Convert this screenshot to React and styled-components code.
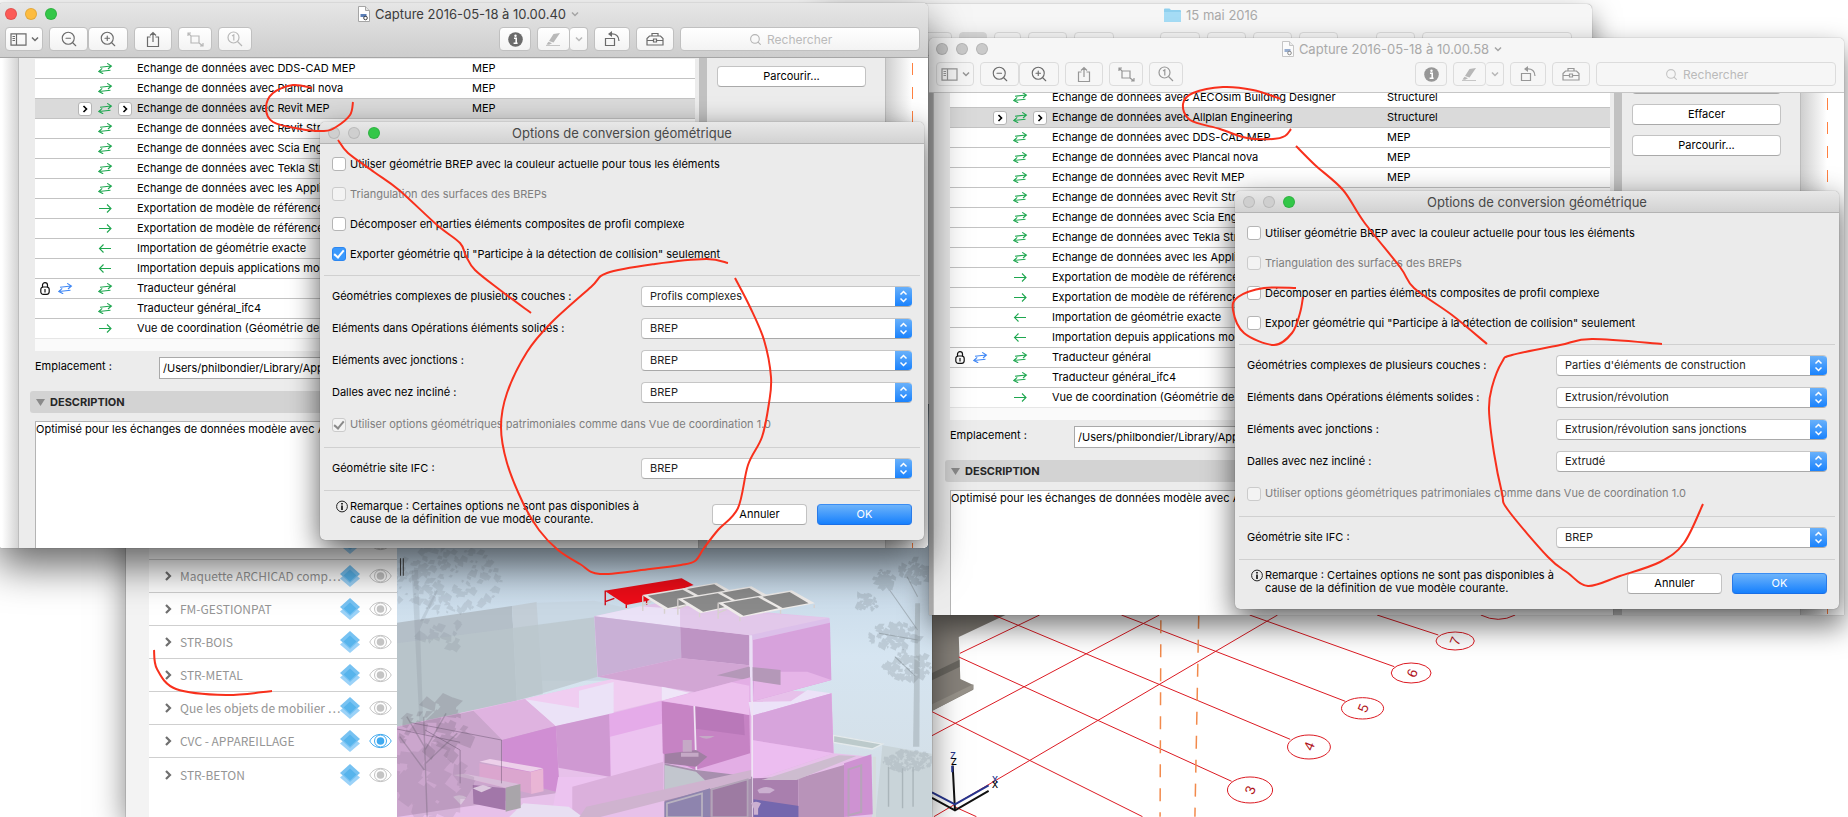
import React, { Fragment, useId, useState } from 'react'
import styled, { createGlobalStyle, css } from 'styled-components'
import { Search, ZoomIn, ZoomOut } from 'lucide-react'

const GlobalStyle = createGlobalStyle`
  * {
    box-sizing: border-box;
  }
  body {
    margin: 0;
    background: #fff;
    font-family: Inter, "Liberation Sans", sans-serif;
    font-size: 11px;
    line-height: 13px;
    color: #000;
  }
  button, input, select, textarea {
    font: inherit;
    color: inherit;
    margin: 0;
  }
`

const Desktop = styled.main`
  position: relative;
  min-height: 100vh;
  overflow: hidden;
`

/* windows */

const Window = styled.section`
  position: absolute;
  overflow: hidden;
  display: flex;
  flex-direction: column;
  background: #fff;
  border-radius: 5px 5px ${props => props.$active ? '5px 5px' : '0 0'};
  left: ${props => props.$x}px;
  top: ${props => props.$y}px;
  width: ${props => props.$w}px;
  height: ${props => props.$h}px;
  box-shadow: ${props => props.$active
    ? '0 0 1px rgba(0, 0, 0, .5), 0 18px 40px rgba(0, 0, 0, .6)'
    : '0 0 1px rgba(0, 0, 0, .5), 0 12px 28px rgba(0, 0, 0, .52)'};
`

const Header = styled.header`
  position: relative;
  flex: none;
  height: 55px;
  padding: 0 8px 0 7px;
  border-bottom: 1px solid ${props => props.$active ? '#a6a6a6' : '#c6c6c6'};
  background: ${props => props.$active ? 'linear-gradient(#e6e6e6, #cdcdcd)' : '#f6f6f6'};
`

const TitleRow = styled.div`
  display: grid;
  grid-template-columns: 60px 1fr 48px;
  align-items: center;
  height: 24px;
  padding-bottom: 2px;
`

const Lights = styled.div`
  display: flex;
  gap: 8px;
`

const Light = styled.button`
  width: 12px;
  height: 12px;
  padding: 0;
  border-radius: 50%;
  border: 1px solid rgba(0, 0, 0, .1);
  background: ${props => props.$color};
`

const Title = styled.h1`
  display: flex;
  align-items: center;
  justify-content: center;
  gap: 5px;
  margin: 0;
  font-size: 13px;
  line-height: 16px;
  font-weight: 400;
  color: ${props => props.$active ? '#3c3c3c' : '#a9a9a9'};
`

const Toolbar = styled.div`
  display: flex;
  gap: 6px;
  color: ${props => props.$active ? '#6b6b6b' : '#979797'};
`

const ToolButton = styled.button`
  display: flex;
  align-items: center;
  justify-content: center;
  gap: 4px;
  height: 24px;
  width: ${props => props.$w}px;
  padding: 0;
  border-radius: 4px;
  border: 1px solid ${props => props.$active ? '#c0c0c0' : '#dcdcdc'};
  background: ${props => props.$active ? 'linear-gradient(#fff, #f3f3f3)' : '#f6f6f6'};
  svg {
    opacity: ${props => props.$faded ? .45 : 1};
  }
`

const Joined = styled.div`
  display: flex;
  color: #6b6b6b;
  button + button {
    border-left-width: ${props => props.$flush ? 0 : 1}px;
  }
`

const Spacer = styled.div`
  flex: 1;
`

const SearchBox = styled.label`
  display: flex;
  align-items: center;
  gap: 5px;
  width: 240px;
  height: 24px;
  padding-left: 68px;
  border-radius: 4px;
  color: ${props => props.$active ? '#b4b4b4' : '#c3c3c3'};
  border: 1px solid ${props => props.$active ? '#c0c0c0' : '#dcdcdc'};
  background: ${props => props.$active ? 'linear-gradient(#fff, #f3f3f3)' : '#f6f6f6'};
`

const SearchInput = styled.input`
  width: 120px;
  border: 0;
  padding: 0;
  background: none;
  outline: none;
  font-size: 12px;
  &::placeholder {
    color: #bababa;
    opacity: 1;
  }
`

/* translator panel */

const Body = styled.div`
  flex: 1;
  display: flex;
  min-height: 0;
  overflow: hidden;
  background: #fff;
`

const Gutter = styled.div`
  flex: none;
  width: ${props => props.$w}px;
  background: ${props => props.$w > 10 ? 'linear-gradient(90deg, #fff 20%, #d4d4d4)' : '#a9a9a9'};
`

const RightGutter = styled.div`
  flex: 1;
  padding-left: 26px;
  background: linear-gradient(90deg, #cfcfcf, #fff 26px);
  &::before {
    content: '';
    display: block;
    width: 1px;
    height: 100%;
    background: repeating-linear-gradient(transparent 0 5px, #ff8040 5px 17px, transparent 17px 24px);
  }
`

const Panel = styled.div`
  display: flex;
  flex: none;
  width: 868px;
  background: #ececec;
  border-left: 1px solid #bdbdbd;
  border-right: 1px solid #bdbdbd;
`

const Main = styled.div`
  flex: none;
  display: flex;
  flex-direction: column;
  width: 680px;
  padding-left: 11px;
  margin-top: ${props => props.$scroll}px;
`

const Table = styled.table`
  width: 660px;
  margin: 0 0 0 5px;
  border-collapse: separate;
  border-spacing: 0;
  table-layout: fixed;
  background: #fff;
`

const Row = styled.tr`
  height: 20px;
  background: ${props => props.$selected ? '#dadada' : '#fff'};
  td {
    padding: 0;
    height: 20px;
    overflow: hidden;
    white-space: nowrap;
    border-bottom: 1px solid #c3c3c3;
    text-align: center;
  }
  &:last-child td {
    height: 18px;
    border-color: #e6e6e6;
  }
  td.text {
    text-align: left;
    padding-left: 2px;
  }
  svg {
    display: block;
    margin: auto;
  }
`

const Pager = styled.button`
  display: block;
  width: 14px;
  height: 14px;
  margin: auto;
  padding: 0;
  border: 1px solid #b5b5b5;
  border-radius: 3px;
  background: #fff;
`

const TableFoot = styled.div`
  flex: none;
  width: 660px;
  height: 12px;
  margin-left: 5px;
  background: #fafafa;
`

const Location = styled.label`
  flex: none;
  display: flex;
  align-items: center;
  height: 22px;
  margin: 6px 0 12px 5px;
`

const LocationLabel = styled.span`
  width: 124px;
  padding-bottom: 4px;
`

const LocationInput = styled.input`
  width: 540px;
  height: 22px;
  padding: 0 3px;
  border: 1px solid #a9a9a9;
  background: #fff;
`

const SectionBar = styled.button`
  flex: none;
  display: flex;
  align-items: center;
  gap: 5px;
  height: 22px;
  padding: 0 6px;
  border: 0;
  border-radius: 3px;
  background: #d3d3d3;
  font-size: 11px;
  font-weight: 700;
  color: #262626;
`

const Description = styled.textarea`
  flex: 1;
  margin: 8px 0 0 5px;
  padding: 1px 0 0;
  border: 1px solid #b4b4b4;
  border-bottom: 0;
  background: #fff;
  resize: none;
`

const ScrollTrack = styled.div`
  flex: none;
  width: 8px;
  background: #c1c1c1;
`

const Side = styled.div`
  display: flex;
  flex-direction: column;
  gap: 10px;
  padding-left: 10px;
  margin-top: ${props => props.$shift}px;
`

const PushButton = styled.button`
  width: ${props => props.$w}px;
  height: 21px;
  padding: 0;
  border: 1px solid #c3c3c3;
  border-bottom-color: #a9a9a9;
  border-radius: 4px;
  background: #fff;
  ${props => props.$primary && css`
    color: #fff;
    border-color: #3b8df2 #2a7be8 #1a6fe6;
    background: linear-gradient(#6db3fa, #1680fd);
  `}
`

/* dialog */

const DialogFrame = styled.form`
  position: absolute;
  left: ${props => props.$x}px;
  top: 119px;
  width: 604px;
  border-radius: 5px;
  background: #ebebeb;
  box-shadow: 0 0 1px rgba(0, 0, 0, .5), 0 10px 30px rgba(0, 0, 0, .65);
  ${props => props.$low && css`
    top: 153px;
  `}
`

const DialogBar = styled.div`
  display: grid;
  grid-template-columns: 60px 1fr 60px;
  align-items: center;
  height: 22px;
  padding: 0 8px;
  border-bottom: 1px solid #b3b3b3;
  border-radius: 5px 5px 0 0;
  background: linear-gradient(#e8e8e8, #d2d2d2);
`

const DialogTitle = styled.h2`
  margin: 0;
  text-align: center;
  font-size: 13px;
  line-height: 16px;
  font-weight: 400;
  color: #484848;
`

const DialogBody = styled.div`
  padding: 5px 12px 14px;
`

const CheckRow = styled.label`
  display: flex;
  align-items: center;
  gap: 4px;
  height: ${props => props.$h || 30}px;
  color: ${props => props.$off ? '#7e7e7e' : '#000'};
`

const CheckBox = styled.input`
  appearance: none;
  display: grid;
  place-items: center;
  width: 14px;
  height: 14px;
  border: 1px solid #b5b5b5;
  border-radius: 3px;
  background: #fff;
  &:checked {
    border-color: #2c86f0;
    background: #3b99fc;
  }
  &:disabled {
    border-color: #cbcbcb;
    background: #f3f3f3;
  }
  &:checked::after {
    content: '';
    width: 4px;
    height: 8px;
    margin-bottom: 2px;
    border: solid #fff;
    border-width: 0 2px 2px 0;
    rotate: 40deg;
  }
  &:disabled:checked::after {
    border-color: #8a8a8a;
  }
`

const Rule = styled.hr`
  height: 1px;
  margin: 6px -8px 4px;
  border: 0;
  background: #d0d0d0;
`

const Field = styled.div`
  display: flex;
  align-items: center;
  justify-content: space-between;
  height: 32px;
`

const SelectBox = styled.div`
  display: flex;
  width: 271px;
  height: 21px;
  overflow: hidden;
  border-radius: 4px;
  background: #fff;
  border: 1px solid #c6c6c6;
  border-bottom-color: #a9a9a9;
  border-right: 0;
`

const Select = styled.select`
  appearance: none;
  flex: 1;
  padding: 0 8px;
  border: 0;
  outline: none;
  background: none;
  color: #222;
`

const Stepper = styled.span`
  display: grid;
  place-items: center;
  width: 17px;
  margin: -1px 0;
  background: linear-gradient(#6db3fa, #1680fd);
`

const Footer = styled.div`
  display: flex;
  align-items: flex-start;
  gap: 10px;
  padding: 5px 0 0 4px;
`

const Note = styled.p`
  display: flex;
  flex: 1;
  margin: 0;
  white-space: nowrap;
  svg {
    flex: none;
    margin-right: 1px;
  }
`

const FooterButtons = styled.div`
  display: flex;
  gap: 10px;
  padding-top: 4px;
`

/* folder window */

const Folder = styled(Window)`
  background: #f6f6f6;
`

const FolderTools = styled.div`
  display: flex;
  gap: 7px;
  padding: 4px 7px 0 100px;
`

const FolderTool = styled.div`
  flex: none;
  width: ${props => props.$w}px;
  height: 24px;
  margin-left: ${props => props.$gap || 0}px;
  border: 1px solid #dcdcdc;
  border-radius: 4px;
  background: ${props => props.$on ? '#dcdcdc' : '#f8f8f8'};
`

/* model viewer */

const Viewer = styled.section`
  position: absolute;
  left: 126px;
  top: 358px;
  bottom: 0;
  width: 806px;
  display: flex;
  background: #fff;
  box-shadow: 0 0 1px rgba(0, 0, 0, .6), 0 10px 30px rgba(0, 0, 0, .5);
`

const ViewerEdge = styled.div`
  width: 23px;
  background: #f3f3f3;
`

const LayerList = styled.ul`
  width: 248px;
  margin: 0;
  padding: 169px 0 0;
  list-style: none;
  font-family: "Noto Sans CJK SC", Lato, sans-serif;
  font-size: 12px;
  line-height: 16px;
  color: #959595;
`

const LayerRow = styled.li`
  display: flex;
  align-items: center;
  height: 33px;
  padding: 0 5px 0 14px;
  border-bottom: 1px solid #cfcfcf;
  &:last-child {
    border: 0;
  }
  svg {
    flex: none;
  }
`

const IconButton = styled.button`
  display: grid;
  align-items: center;
  justify-items: end;
  flex: none;
  width: ${props => props.$w}px;
  padding: 0;
  border: 0;
  background: none;
`

const LayerName = styled.span`
  flex: 1;
  min-width: 0;
  padding-left: 8px;
  white-space: nowrap;
`

const Scene = styled.div`
  flex: 1;
  padding-top: 190px;
  background: #c3d6e6;
  svg {
    display: block;
  }
`

const PlanView = styled.section`
  position: absolute;
  left: 932px;
  right: 0;
  top: 615px;
  bottom: 0;
  background: #fff;
`

const Ink = styled.svg`
  position: absolute;
  left: 0;
  top: 0;
  pointer-events: none;
`

/* icons */

const line = { fill: 'none', stroke: 'currentColor', strokeWidth: 1.2 }

const Chevron = ({ size = 8, width = 1.5, color = 'currentColor' }) => (
  <svg width={size} height={size} viewBox='0 0 8 8' fill='none' stroke={color} strokeWidth={width}>
    <path d='M1 2.5l3 3 3-3' />
  </svg>
)

const SidebarIcon = () => (
  <svg width='17' height='13' viewBox='0 0 17 13' {...line}>
    <path d='M1 .8h15v11.4H1zM6.5 1v11M2.5 3.5h2.500M2.500 5.500h2.500M2.500 7.500h2.500' />
  </svg>
)

const ShareIcon = () => (
  <svg width='14' height='17' viewBox='0 0 14 17' {...line}>
    <path d='M4.500 6H1.500v9.500h11V6h-3M7 11V1.500M4 4.500l3-3 3 3' />
  </svg>
)

const CropIcon = () => (
  <svg width='17' height='15' viewBox='0 0 17 15' {...line}>
    <path d='M4 4h8v7H4zM1 4V1h3M1 1l3 3M13 14h3v-3M16 14l-4-3' />
  </svg>
)

const ActualIcon = () => (
  <svg width='16' height='16' viewBox='0 0 16 16' {...line}>
    <circle cx='6.500' cy='6.500' r='5.500' />
    <path d='M10.500 10.500L15 15M5 5l1.800-1.200V9.500' />
  </svg>
)

const InfoIcon = () => (
  <svg width='15' height='15' viewBox='0 0 15 15'>
    <circle cx='7.500' cy='7.500' r='7.300' fill='currentColor' />
    <path d='M6 6.300h2.200V11M5.600 11.200h4' stroke='#fff' strokeWidth='1.600' fill='none' />
    <circle cx='7.500' cy='3.700' r='1.200' fill='#fff' />
  </svg>
)

const PenIcon = () => (
  <svg width='17' height='13' viewBox='0 0 17 13' fill='currentColor'>
    <path d='M8.500 1L15 0 8.500 9.500 4 8zM3.500 8.800l3.500 1.400-3 1.600-2.500-.2zM1 12.200h14v.8H1z' />
  </svg>
)

const RotateIcon = () => (
  <svg width='17' height='16' viewBox='0 0 17 16' {...line}>
    <path d='M1.500 7.500h9v7h-9zM7 3c5-.4 8 2 8 7' />
    <path d='M4 3l4-3v6z' fill='currentColor' stroke='none' />
  </svg>
)

const CaseIcon = () => (
  <svg width='18' height='14' viewBox='0 0 18 14' {...line}>
    <path d='M1 13V6.500L3.500 4h11L17 6.500V13zM6 4V1.500h6V4M1 8.500h6.500M10.500 8.500H17M7.500 7h3v3h-3z' />
  </svg>
)

const FileIcon = ({ faded }) => (
  <svg width='12' height='16' viewBox='0 0 12 16' opacity={faded ? 0.6 : 1}>
    <path d='M.5.5h7l4 4v11H.5z' fill='#fff' stroke='#a5a5a5' />
    <path d='M7.500.5v4h4' fill='#e5e5e5' stroke='#a5a5a5' />
    <path d='M2.500 8h6v3h-6z' fill='#5b7fb8' />
    <circle cx='7.500' cy='12' r='1.800' fill='none' stroke='#444' />
  </svg>
)

const arrowPaths = {
  both: 'M2 4.200L13.200 3M9.200.4l4.200 2.600-3.400 3M12.500 7.200L1 8.500M4.200 5.400L.8 8.500l4.400 2.300',
  right: 'M1 5.500h12M9 1.500l4 4-4 4',
  left: 'M13 5.500H1.500M5.500 1.500l-4 4 4 4'
}

const Arrow = ({ kind, color = '#1fa750' }) => (
  <svg width='15' height='11' viewBox='0 0 15 11' fill='none' stroke={color} strokeWidth='1.100'>
    <path d={arrowPaths[kind]} />
  </svg>
)

const LockIcon = () => (
  <svg width='10' height='13' viewBox='0 0 10 13' fill='none' stroke='#111' strokeWidth='1.200'>
    <path d='M2.500 5.500V3a2.500 2.300 0 0 1 5 0v2.500' />
    <rect x='.8' y='5' width='8.400' height='7.300' rx='2.500' />
    <path d='M5 7v3.500' />
  </svg>
)

const NoteIcon = () => (
  <svg width='13' height='13' viewBox='0 0 13 13' fill='none' stroke='#222'>
    <circle cx='6' cy='6.500' r='5.400' />
    <path d='M6 5.500V10M6 3v1.500' strokeWidth='1.800' />
  </svg>
)

const StepperIcon = () => (
  <svg width='9' height='13' viewBox='0 0 9 13' fill='none' stroke='#fff' strokeWidth='1.500'>
    <path d='M1.500 4.500l3-3 3 3M1.500 8.500l3 3 3-3' />
  </svg>
)

const LayersIcon = () => (
  <svg width='20' height='22' viewBox='0 0 20 22'>
    <path d='M10 5l10 8.500L10 22 0 13.500z' fill='#9bd2f8' />
    <path d='M10 0l10 9-10 9L0 9z' fill='#77c2f2' />
    <path d='M10 4.500l6.500 6L10 16.500l-6.500-6z' fill='#57b4ec' />
  </svg>
)

const EyeIcon = ({ on }) => (
  <svg width='23' height='16' viewBox='0 0 23 16' fill='none' stroke={on ? '#3fa9f0' : '#c4c4c4'}>
    <path d='M.8 8C5-.8 18-.8 22.200 8 18 16.800 5 16.800.8 8z' />
    <circle cx='11.500' cy='8' r='6' />
    <circle cx='11.500' cy='8' r='3.800' fill={on ? '#3fa9f0' : '#c4c4c4'} stroke='none' />
  </svg>
)

const FolderIcon = () => (
  <svg width='17' height='14' viewBox='0 0 17 14'>
    <path d='M0 1.500Q0 .5 1 .5h4.500L7 2h9q1 0 1 1v10.500H0z' fill='#8fd0ee' />
    <path d='M0 4h17v10H0z' fill='#a5dcf5' />
  </svg>
)

/* data */

const baseRows = [
  ['both', 'Echange de données avec DDS-CAD MEP', 'MEP'],
  ['both', 'Echange de données avec Plancal nova', 'MEP'],
  ['both', 'Echange de données avec Revit MEP', 'MEP'],
  ['both', 'Echange de données avec Revit Structure', ''],
  ['both', 'Echange de données avec Scia Engineer', ''],
  ['both', 'Echange de données avec Tekla Structures', ''],
  ['both', 'Echange de données avec les Applications', ''],
  ['right', 'Exportation de modèle de référence', ''],
  ['right', 'Exportation de modèle de référence', ''],
  ['left', 'Importation de géométrie exacte', ''],
  ['left', 'Importation depuis applications modèle', ''],
  ['both', 'Traducteur général', '', true],
  ['both', 'Traducteur général_ifc4', ''],
  ['right', 'Vue de coordination (Géométrie de base)', '']
]

const structuralRows = [
  ['both', 'Echange de données avec AECOsim Building Designer', 'Structurel'],
  ['both', 'Echange de données avec Allplan Engineering', 'Structurel']
]

const fieldNames = [
  'Géométries complexes de plusieurs couches :',
  'Eléments dans Opérations éléments solides :',
  'Eléments avec jonctions :',
  'Dalles avec nez incliné :'
]

const layers = [
  ['', false],
  ['Maquette ARCHICAD comp…', false],
  ['FM-GESTIONPAT', false],
  ['STR-BOIS', false],
  ['STR-METAL', false],
  ['Que les objets de mobilier …', false],
  ['CVC - APPAREILLAGE', true],
  ['STR-BETON', false]
]

// pen strokes drawn over the desktop
const strokes = [
  [[312, 88], [293, 85], [273, 93], [266, 108], [273, 122], [300, 129], [324, 131], [336, 127], [350, 115], [353, 102]],
  [[338, 140], [348, 153], [374, 172], [399, 190], [437, 225], [460, 243], [466, 256], [475, 270], [500, 290], [531, 313]],
  [[728, 263], [706, 259], [655, 264], [607, 273], [591, 287], [551, 323], [527, 352], [507, 393], [501, 427], [507, 463], [523, 503], [539, 530], [558, 550], [580, 564], [600, 574], [650, 569], [681, 565], [695, 561], [704, 548], [718, 530], [738, 508], [748, 465], [762, 437], [769, 403], [771, 377], [764, 340], [750, 307], [735, 278]],
  [[154, 650], [157, 669], [176, 689], [226, 695], [272, 691]],
  [[1281, 99], [1253, 90], [1223, 87], [1193, 93], [1183, 104], [1190, 120], [1220, 129], [1247, 138], [1273, 139], [1285, 136], [1291, 129]],
  [[1296, 146], [1315, 165], [1343, 190], [1364, 222], [1400, 267], [1414, 288], [1452, 315], [1487, 344]],
  [[1296, 288], [1264, 288], [1238, 297], [1233, 310], [1244, 333], [1274, 345], [1292, 333], [1300, 313], [1303, 297]],
  [[1662, 344], [1592, 339], [1560, 345], [1512, 355], [1502, 362], [1492, 387], [1489, 410], [1494, 453], [1502, 493], [1508, 510], [1548, 557], [1568, 573], [1588, 586], [1620, 576], [1660, 562], [1684, 543], [1703, 504]]
]

const toPath = (pts) => pts.slice(1).reduce((d, p, i) => {
  const p0 = pts[Math.max(i - 1, 0)]
  const p1 = pts[i]
  const p3 = pts[Math.min(i + 2, pts.length - 1)]
  const c1 = [p1[0] + (p[0] - p0[0]) / 6, p1[1] + (p[1] - p0[1]) / 6]
  const c2 = [p[0] - (p3[0] - p1[0]) / 6, p[1] - (p3[1] - p1[1]) / 6]
  return `${d} C${c1} ${c2} ${p}`
}, `M${pts[0]}`)

/* components */

const Dialog = ({ x, low, checked, values }) => {
  const id = useId()
  const [collision, setCollision] = useState(checked)

  return (
    <DialogFrame $x={x} $low={low} onSubmit={e => e.preventDefault()}>
      <DialogBar>
        <Lights>
          <Light type='button' aria-label='Fermer' $color='#cfcfcf' />
          <Light type='button' aria-label='Réduire' $color='#cfcfcf' />
          <Light type='button' aria-label='Agrandir' $color='#33c748' />
        </Lights>
        <DialogTitle>Options de conversion géométrique</DialogTitle>
      </DialogBar>
      <DialogBody>
        <CheckRow>
          <CheckBox type='checkbox' />
          Utiliser géométrie BREP avec la couleur actuelle pour tous les éléments
        </CheckRow>
        <CheckRow $off>
          <CheckBox type='checkbox' disabled />
          Triangulation des surfaces des BREPs
        </CheckRow>
        <CheckRow>
          <CheckBox type='checkbox' />
          Décomposer en parties éléments composites de profil complexe
        </CheckRow>
        <CheckRow>
          <CheckBox
            type='checkbox'
            checked={collision}
            onChange={e => setCollision(e.target.checked)}
          />
          Exporter géométrie qui "Participe à la détection de collision" seulement
        </CheckRow>
        <Rule />
        {fieldNames.map((name, i) => (
          <Field key={name}>
            <label htmlFor={`${id}${i}`}>{name}</label>
            <SelectBox>
              <Select id={`${id}${i}`}><option>{values[i]}</option></Select>
              <Stepper><StepperIcon /></Stepper>
            </SelectBox>
          </Field>
        ))}
        <CheckRow $off $h={33}>
          <CheckBox type='checkbox' disabled defaultChecked={checked} />
          Utiliser options géométriques patrimoniales comme dans Vue de coordination 1.0
        </CheckRow>
        <Rule />
        <Field>
          <label htmlFor={`${id}ifc`}>Géométrie site IFC :</label>
          <SelectBox>
            <Select id={`${id}ifc`}><option>BREP</option></Select>
            <Stepper><StepperIcon /></Stepper>
          </SelectBox>
        </Field>
        <Rule />
        <Footer>
          <Note>
            <NoteIcon />
            <span>
              Remarque : Certaines options ne sont pas disponibles à<br />
              cause de la définition de vue modèle courante.
            </span>
          </Note>
          <FooterButtons>
            <PushButton type='button' $w={95}>Annuler</PushButton>
            <PushButton type='submit' $w={95} $primary>OK</PushButton>
          </FooterButtons>
        </Footer>
      </DialogBody>
    </DialogFrame>
  )
}

const WindowHeader = ({ title, active }) => {
  const lights = active ? ['#fc5b57', '#fdbc40', '#33c748'] : ['#cacaca', '#cacaca', '#cacaca']

  return (
    <Header $active={active}>
      <TitleRow>
        <Lights>
          {lights.map((color, i) => <Light key={i} $color={color} aria-label='Fenêtre' />)}
        </Lights>
        <Title $active={active}>
          <FileIcon faded={!active} />
          {title}
          <Chevron color='#a5a5a5' />
        </Title>
      </TitleRow>
      <Toolbar $active={active}>
        <ToolButton $active={active} $w={38} aria-label='Présentation'><SidebarIcon /><Chevron /></ToolButton>
        <Joined>
          <ToolButton $active={active} $w={39} aria-label='Réduire'><ZoomOut size={18} strokeWidth={1.500} /></ToolButton>
          <ToolButton $active={active} $w={40} aria-label='Agrandir'><ZoomIn size={18} strokeWidth={1.500} /></ToolButton>
        </Joined>
        <ToolButton $active={active} $w={38} aria-label='Partager'><ShareIcon /></ToolButton>
        <ToolButton $active={active} $w={34} $faded={active} aria-label='Ajuster'><CropIcon /></ToolButton>
        <ToolButton $active={active} $w={34} $faded={active} aria-label='Taille réelle'><ActualIcon /></ToolButton>
        <Spacer />
        <ToolButton $active={active} $w={32} aria-label='Informations'><InfoIcon /></ToolButton>
        <Joined $flush>
          <ToolButton $active={active} $w={33} $faded aria-label='Surligner'><PenIcon /></ToolButton>
          <ToolButton $active={active} $w={18} $faded aria-label='Couleur'><Chevron /></ToolButton>
        </Joined>
        <ToolButton $active={active} $w={36} aria-label='Rotation'><RotateIcon /></ToolButton>
        <ToolButton $active={active} $w={38} aria-label='Outils'><CaseIcon /></ToolButton>
        <SearchBox $active={active}>
          <Search size={13} strokeWidth={2} />
          <SearchInput placeholder='Rechercher' aria-label='Rechercher' />
        </SearchBox>
      </Toolbar>
    </Header>
  )
}

const PagerIcon = () => (
  <svg width='6' height='8' viewBox='0 0 6 8' fill='none' stroke='#000' strokeWidth='1.600'>
    <path d='M1.500 1l3 3-3 3' />
  </svg>
)

const Translators = ({ rows, selected, gutter, scroll, buttons, shift }) => (
  <Body>
    <Gutter $w={gutter} />
    <Panel>
      <Main $scroll={scroll}>
        <Table>
          <colgroup>
            {[20, 20, 20, 20, 20, 335].map((w, i) => <col key={i} width={w} />)}
            <col />
          </colgroup>
          <tbody>
            {rows.map(([kind, name, type, locked], i) => (
              <Row key={i} $selected={i === selected}>
                <td>{locked && <LockIcon />}</td>
                <td>{locked && <Arrow kind='both' color='#3d86f5' />}</td>
                <td>{i === selected && <Pager aria-label='Précédent'><PagerIcon /></Pager>}</td>
                <td><Arrow kind={kind} /></td>
                <td>{i === selected && <Pager aria-label='Suivant'><PagerIcon /></Pager>}</td>
                <td className='text'>{name}</td>
                <td className='text'>{type}</td>
              </Row>
            ))}
          </tbody>
        </Table>
        <TableFoot />
        <Location>
          <LocationLabel>Emplacement :</LocationLabel>
          <LocationInput defaultValue='/Users/philbondier/Library/Application Support' />
        </Location>
        <SectionBar>
          <svg width='9' height='7' viewBox='0 0 9 7'><path d='M0 0h9L4.500 7z' fill='#8a8a8a' /></svg>
          DESCRIPTION
        </SectionBar>
        <Description aria-label='Description' defaultValue='Optimisé pour les échanges de données modèle avec Autodesk' />
      </Main>
      <ScrollTrack />
      <Side $shift={shift}>
        {buttons.map(label => <PushButton key={label} $w={149}>{label}</PushButton>)}
      </Side>
    </Panel>
    <RightGutter />
  </Body>
)

// loose leaves scattered round a centre
const Leaves = ({ cx, cy, rx, ry, n, size, fill, opacity = 0.2 }) => {
  let seed = cx * 7 + cy
  const rnd = () => {
    seed = (seed * 16807 + 11) % 2147483647
    return seed / 2147483647
  }
  const leaves = Array.from({ length: n }, () => {
    const a = rnd() * 6.283
    const r = Math.sqrt(rnd())
    const x = cx + Math.cos(a) * rx * r
    const y = cy + Math.sin(a) * ry * r
    const s = size * (0.4 + rnd())
    return `M${x.toFixed(1)} ${y.toFixed(1)}l${(s * rnd()).toFixed(1)} ${(-s).toFixed(1)}l${s.toFixed(1)} ${(s * rnd()).toFixed(1)}l${(-s * rnd()).toFixed(1)} ${s.toFixed(1)}z`
  })
  return <path d={leaves.join('')} fill={fill} fillOpacity={opacity} />
}

const Model = () => (
  <svg width='535' height='269' viewBox='20 54 1526 807' preserveAspectRatio='none'>
    <defs>
      <linearGradient id='sky' x2='0' y2='1'>
        <stop offset='0' stopColor='#c3d6e6' />
        <stop offset='.4' stopColor='#d6e5f1' />
        <stop offset='1' stopColor='#d3dde4' />
      </linearGradient>
    </defs>
    <path d='M20 54h1526v807H20z' fill='url(#sky)' />
    <path d='M418 218L583 212l170 40v200H420z' fill='#c9d8e4' />
    <path d='M20 278L348 228l14 285L20 600z' fill='#b4bfc8' />
    <path d='M348 228l70-12 18 276-74 18z' fill='#c3ced7' />
    <path d='M20 340l332-46 231-32 9 178-230 72L20 600z' fill='#b9c5cb' fillOpacity='.75' />
    <path d='M1265 616l140 24-20 221h160v-190l-140-25z' fill='#c9d4d9' />
    <path d='M1265 616l140 26-30 15-110-20z' fill='#bccacb' stroke='#e4eaec' strokeWidth='4' />
    <Leaves cx={150} cy={150} rx={165} ry={100} n={190} size={12} fill='#7c8790' />
    <Leaves cx={130} cy={310} rx={70} ry={50} n={22} size={15} fill='#7c8790' />
    <path d='M62 120l18 0 16 500-10 0zM72 300l60-120 4 4-58 130' fill='#7c8790' fillOpacity='.2' />
    <path d='M1498 220l14 0-2 430h-18z' fill='#a5b0b8' fillOpacity='.6' />
    <path d='M1505 300l-80-120M1505 330l-110-20M1505 200l-30-60M1500 440l-60-60' stroke='#9aa5ad' strokeWidth='3' opacity='.7' />
    <Leaves cx={1400} cy={150} rx={26} ry={30} n={45} size={12} fill='#5d676e' />
    <Leaves cx={1490} cy={130} rx={45} ry={36} n={45} size={12} fill='#5d676e' />
    <Leaves cx={1350} cy={220} rx={38} ry={26} n={32} size={11} fill='#5d676e' />
    <Leaves cx={1430} cy={320} rx={75} ry={38} n={80} size={12} fill='#5d676e' />
    <Leaves cx={1470} cy={410} rx={70} ry={42} n={85} size={12} fill='#5d676e' />
    <Leaves cx={1475} cy={695} rx={70} ry={32} n={200} size={7} fill='#7c8790' />
    <path d='M1422 710v120M1462 715v120M1492 710v120' stroke='#aab5ba' strokeWidth='4' />
    {/* lower wing */}
    <path d='M20 590L640 448l620 42 5 180 110 10v181H20z' fill='#e7c1ea' />
    <path d='M20 590l218-48 235 46 10 200L20 861z' fill='#cba6cd' />
    <path d='M238 542l148-36 90 82-156 42z' fill='#dfb3e0' />
    <path d='M386 506l252-60 137 0v65L473 588z' fill='#f0cdf1' />
    <path d='M386 508l153 26 0-52 99-26v95l-165 37z' fill='#ebe2f7' />
    <path d='M473 588l155-37 2 190-150-28z' fill='#cf99d2' />
    <path d='M320 630l153-42 11 200-164-45z' fill='#d08ed3' />
    <path d='M625 552l150-40 6 185-151 44z' fill='#e5abe9' />
    <path d='M628 620l152-40v120l-260 80v81h-60l20-120 150 0z' fill='#ecc3f0' />
    <path d='M520 770l260-75v105l-240 61h-20z' fill='#dbb0dc' />
    <path d='M380 820l130 10 40 31H340z' fill='#e8dff2' />
    {/* upper block */}
    <path d='M583 259l180-40 490 44 5 187-230 64-436-74z' fill='#e3c4ea' />
    <path d='M583 259l130-30 115 8v55z' fill='#ebe2f7' />
    <path d='M583 259l245 32 3 93-238 56z' fill='#c9b0d6' />
    <path d='M828 291l197 24-1 91-193-21z' fill='#be94c4' />
    <path d='M831 384l193 22 4 106-436-72z' fill='#d2a6d4' />
    <path d='M828 234l425 30-228 52-197-25z' fill='#e2c8ea' />
    <path d='M1025 316l228-52 2 16-225 50z' fill='#dcc0ea' />
    <path d='M1035 330l220-52 4 172-224 64z' fill='#d7a2dc' />
    <path d='M1040 425l150 0 69 25-224 64z' fill='#e6b5e8' />
    <path d='M932 436l90-26 92 10v45z' fill='#b498b8' />
    <path d='M1025 316h8l2 198h-7z' fill='#eadff5' />
    {/* middle block */}
    <path d='M775 512l253-70v112l231-64 6 180-231 82-254-54z' fill='#e3aee5' />
    <path d='M775 470l80 18-80 24z' fill='#efe5f8' />
    <path d='M775 514l250 40 2 116-157 50-92-50z' fill='#c683c4' />
    <path d='M868 526l140 10 4 80-140-20z' fill='#b978b9' />
    <path d='M775 512l200-55 50 10v88z' fill='#edc0ee' />
    <path d='M1023 516l120-2 48-34 68 10-229 68z' fill='#ece2f8' />
    <path d='M1030 558l229-68 6 180-233-40z' fill='#d7a4dc' />
    <path d='M1032 630l233 40-230 82z' fill='#ecbdf0' />
    <path d='M868 528l6 196M1033 512v348M1130 600' stroke='#efe4f4' strokeWidth='5' fill='none' />
    <path d='M783 672l90-12 32 20-32 30-90-10z' fill='#a07fa3' />
    <path d='M835 630h26v35h-26zM830 668h50v12h-50zM880 618q22 16 46 0z' fill='#c5a9c6' />
    {/* ground floor */}
    <path d='M783 700l90 20 160 20v121H783z' fill='#a78fae' />
    <path d='M783 705l90 20 40 40-130 40z' fill='#c2c6ce' />
    <path d='M560 830l470-110v26L600 861h-60z' fill='#cfb3cf' />
    <path d='M783 815l130-40v86H783z' fill='#8e84ae' />
    <path d='M790 820l100-30v71h-100z' fill='none' stroke='#b9b3c0' strokeWidth='5' />
    <path d='M918 778l102-30v113H918z' fill='#9d7ba2' stroke='#b3a4b8' strokeWidth='5' />
    <path d='M1035 745l130-5v121h-130z' fill='#a97fae' />
    <path d='M1037 808l130 20 130 33h-260z' fill='#7467ae' />
    <path d='M1165 745l130-40v156h-130z' fill='#b893b9' />
    <path d='M1295 700l78-27 4 180-82 8z' fill='#ce92d2' />
    <path d='M1060 750l220-74 50 2-170 72z' fill='#cdbccf' />
    <path d='M1308 718l36-12v140l-36 10z' fill='none' stroke='#b7a3ba' strokeWidth='6' />
    <path d='M1382 680v181' stroke='#d5dcdc' strokeWidth='8' />
    <path d='M1048 780q26-18 50 0l-15 10h-30zM1030 820q14-10 28 0l-8 16v18h-12v-18z' fill='#cbb0d0' />
    {/* furniture in the left wing */}
    <path d='M255 695l30-8 152 28-36 10z' fill='#edd0ea' />
    <path d='M255 700l146 26 2 65-148-36z' fill='#dba6cf' />
    <path d='M401 726l36-10 1 68-35 8z' fill='#e9b5d5' />
    <path d='M236 765l94 10 0 66-92-20z' fill='#a277a9' />
    <path d='M180 735l150 38 42-10-160-32z' fill='#d8bdd9' />
    <path d='M330 773l42-11 1 72-43 11z' fill='#a9a5aa' />
    <path d='M235 775l30-10 26 8-30 14zM180 800q20-10 38 2l-16 22z' fill='#dcc8de' />
    <path d='M60 578l258 52v130M100 600l100 60v100M20 597l180 40' stroke='#5a4763' strokeWidth='2' fill='none' opacity='.6' />
    <Leaves cx={110} cy={600} rx={95} ry={90} n={30} size={28} fill='#5e5563' />
    <Leaves cx={90} cy={760} rx={110} ry={95} n={50} size={34} fill='#75617c' opacity={0.16} />
    <path d='M96 560l10 300M100 660l60-110M98 650l-50-90M102 700l90-90M98 720l-70-100' stroke='#5e5563' strokeWidth='4' opacity='.3' fill='none' />
    {/* solar panels */}
    <path d='M612 182l220-37 34 20-134 48-58 12z' fill='#ee0c18' />
    <path d='M614 182v44M674 224v10M640 205l-26 10M732 210v14' stroke='#d30a16' strokeWidth='4' fill='none' />
    {[[719, 195], [819, 206], [934, 218]].map(([x, y]) => (
      <Fragment key={x}>
        <path d={`M${x} ${y}l212-37 66 39-212 42z`} fill='#f0edeb' />
        <path d={`M${x + 16} ${y + 2}l100-18 58 33-100 22zM${x + 128} ${y - 18}l78-14 54 34-74 14z`} fill='#8b8b8b' />
        <path d={`M${x + 2} ${y + 2}v46M${x + 64} ${y + 42}v14M${x + 26} ${y + 20}l-22 10M${x + 180} ${y + 22}v12M${x + 276} ${y + 6}v10`} stroke='#d8d2d0' strokeWidth='4' fill='none' />
      </Fragment>
    ))}
    <path d='M30 85v52M38 85v52' stroke='#444' strokeWidth='3' />
  </svg>
)

const Plan = () => (
  <svg width='600' height='202'>
    <g transform='scale(.3827 .3333) translate(-32 -76)' fill='none' stroke='#dc1a22'>
      <path d='M32 76h192L102 142l4 126 34 18v14L32 364z' fill='#86817a' stroke='none' />
      <path d='M32 250l72-40v22l-72 40z' fill='#68655f' stroke='none' />
      <path d='M32 364l108-66v-14L32 344z' fill='#97928a' stroke='none' />
      <path
        vectorEffect='non-scaling-stroke'
        d='M193 76L968 449M102 202L815 575M32 366L582 681M527 76L1112 335M862 76L1240 231M1195 76L1355 136M105 191L313 76M32 438L626 76M37 681L935 76M92 652L148 681'
      />
      <g stroke='#dc1a22'>
        <ellipse vectorEffect='non-scaling-stroke' cx='1399' cy='154' rx='50' ry='27' />
        <ellipse vectorEffect='non-scaling-stroke' cx='1284' cy='250' rx='52' ry='30' />
        <ellipse vectorEffect='non-scaling-stroke' cx='1157' cy='356' rx='55' ry='32' />
        <ellipse vectorEffect='non-scaling-stroke' cx='1017' cy='472' rx='56' ry='36' />
        <ellipse vectorEffect='non-scaling-stroke' cx='863' cy='601' rx='59' ry='39' />
        <path vectorEffect='non-scaling-stroke' d='M1466 76q46 26 90 0' />
      </g>
      <path vectorEffect='non-scaling-stroke' stroke='#f28a4c' strokeWidth='1.500' strokeDasharray='13 11' d='M630 92L628 681M729 78L719 681' />
      <path vectorEffect='non-scaling-stroke' stroke='#111' strokeWidth='2' d='M86 528l6 134M32 625l60 37 88-58' />
      <path vectorEffect='non-scaling-stroke' stroke='#27358f' strokeWidth='2' d='M32 608l60 36 88-57M85 528v20' />
    </g>
    <g fill='#b01218' fontSize='14' textAnchor='middle' fontFamily='"Liberation Sans", sans-serif'>
      <text transform='translate(523 26) rotate(-68)' y='5'>7</text>
      <text transform='translate(480 58) rotate(-68)' y='5'>6</text>
      <text transform='translate(431 93) rotate(-68)' y='5'>5</text>
      <text transform='translate(377 131) rotate(-68)' y='5'>4</text>
      <text transform='translate(318 175) rotate(-68)' y='5'>3</text>
    </g>
    <g fontSize='12' textAnchor='middle' fontFamily='"Liberation Sans", sans-serif'>
      <text x='21' y='144' fill='#27358f'>z</text>
      <text x='22' y='150'>z</text>
      <text x='63' y='168' fill='#27358f'>x</text>
      <text x='63' y='173'>x</text>
    </g>
  </svg>
)

const App = () => (
  <Desktop>
    <GlobalStyle />
    <PlanView><Plan /></PlanView>
    <Viewer>
      <ViewerEdge />
      <LayerList>
        {layers.map(([name, on]) => (
          <LayerRow key={name}>
            <IconButton $w={9} aria-label='Déplier'>
              <svg width='8' height='10' viewBox='0 0 8 10' fill='none' stroke='#6f6f6f' strokeWidth='2.200'><path d='M2 1l4 4-4 4' /></svg>
            </IconButton>
            <LayerName>{name}</LayerName>
            <LayersIcon />
            <IconButton $w={32} aria-label='Visibilité'><EyeIcon on={on} /></IconButton>
          </LayerRow>
        ))}
      </LayerList>
      <Scene><Model /></Scene>
    </Viewer>
    <Folder $x={818} $y={4} $w={774} $h={400}>
      <TitleRow>
        <span />
        <Title><FolderIcon />15 mai 2016</Title>
      </TitleRow>
      <FolderTools>
        <FolderTool $w={34} />
        <FolderTool $w={28} $on />
        <FolderTool $w={27} />
        <FolderTool $w={39} />
        <FolderTool $w={40} />
        <FolderTool $w={40} $gap={39} />
        <FolderTool $w={39} />
        <FolderTool $w={39} />
        <FolderTool $w={39} />
        <FolderTool $w={39} $gap={31} />
        <FolderTool $w={150} />
      </FolderTools>
    </Folder>
    <Window $x={929} $y={38} $w={915} $h={577}>
      <WindowHeader title='Capture 2016-05-18 à 10.00.58' />
      <Translators
        rows={[...structuralRows, ...baseRows]}
        selected={1}
        gutter={4}
        scroll={-5}
        shift={-20}
        buttons={['', 'Effacer', 'Parcourir...']}
      />
      <Dialog
        x={306}
        low
        checked={false}
        values={["Parties d'éléments de construction", 'Extrusion/révolution', 'Extrusion/révolution sans jonctions', 'Extrudé']}
      />
    </Window>
    <Window $active $x={-2} $y={3} $w={930} $h={545}>
      <WindowHeader active title='Capture 2016-05-18 à 10.00.40' />
      <Translators
        rows={baseRows}
        selected={2}
        gutter={20}
        scroll={1}
        shift={8}
        buttons={['Parcourir...']}
      />
      <Dialog x={322} checked values={['Profils complexes', 'BREP', 'BREP', 'BREP']} />
    </Window>
    <Ink width='1848' height='817' fill='none' stroke='#f8301c' strokeWidth='2'>
      {strokes.map((pts, i) => <path key={i} d={toPath(pts)} />)}
    </Ink>
  </Desktop>
)

export default App
